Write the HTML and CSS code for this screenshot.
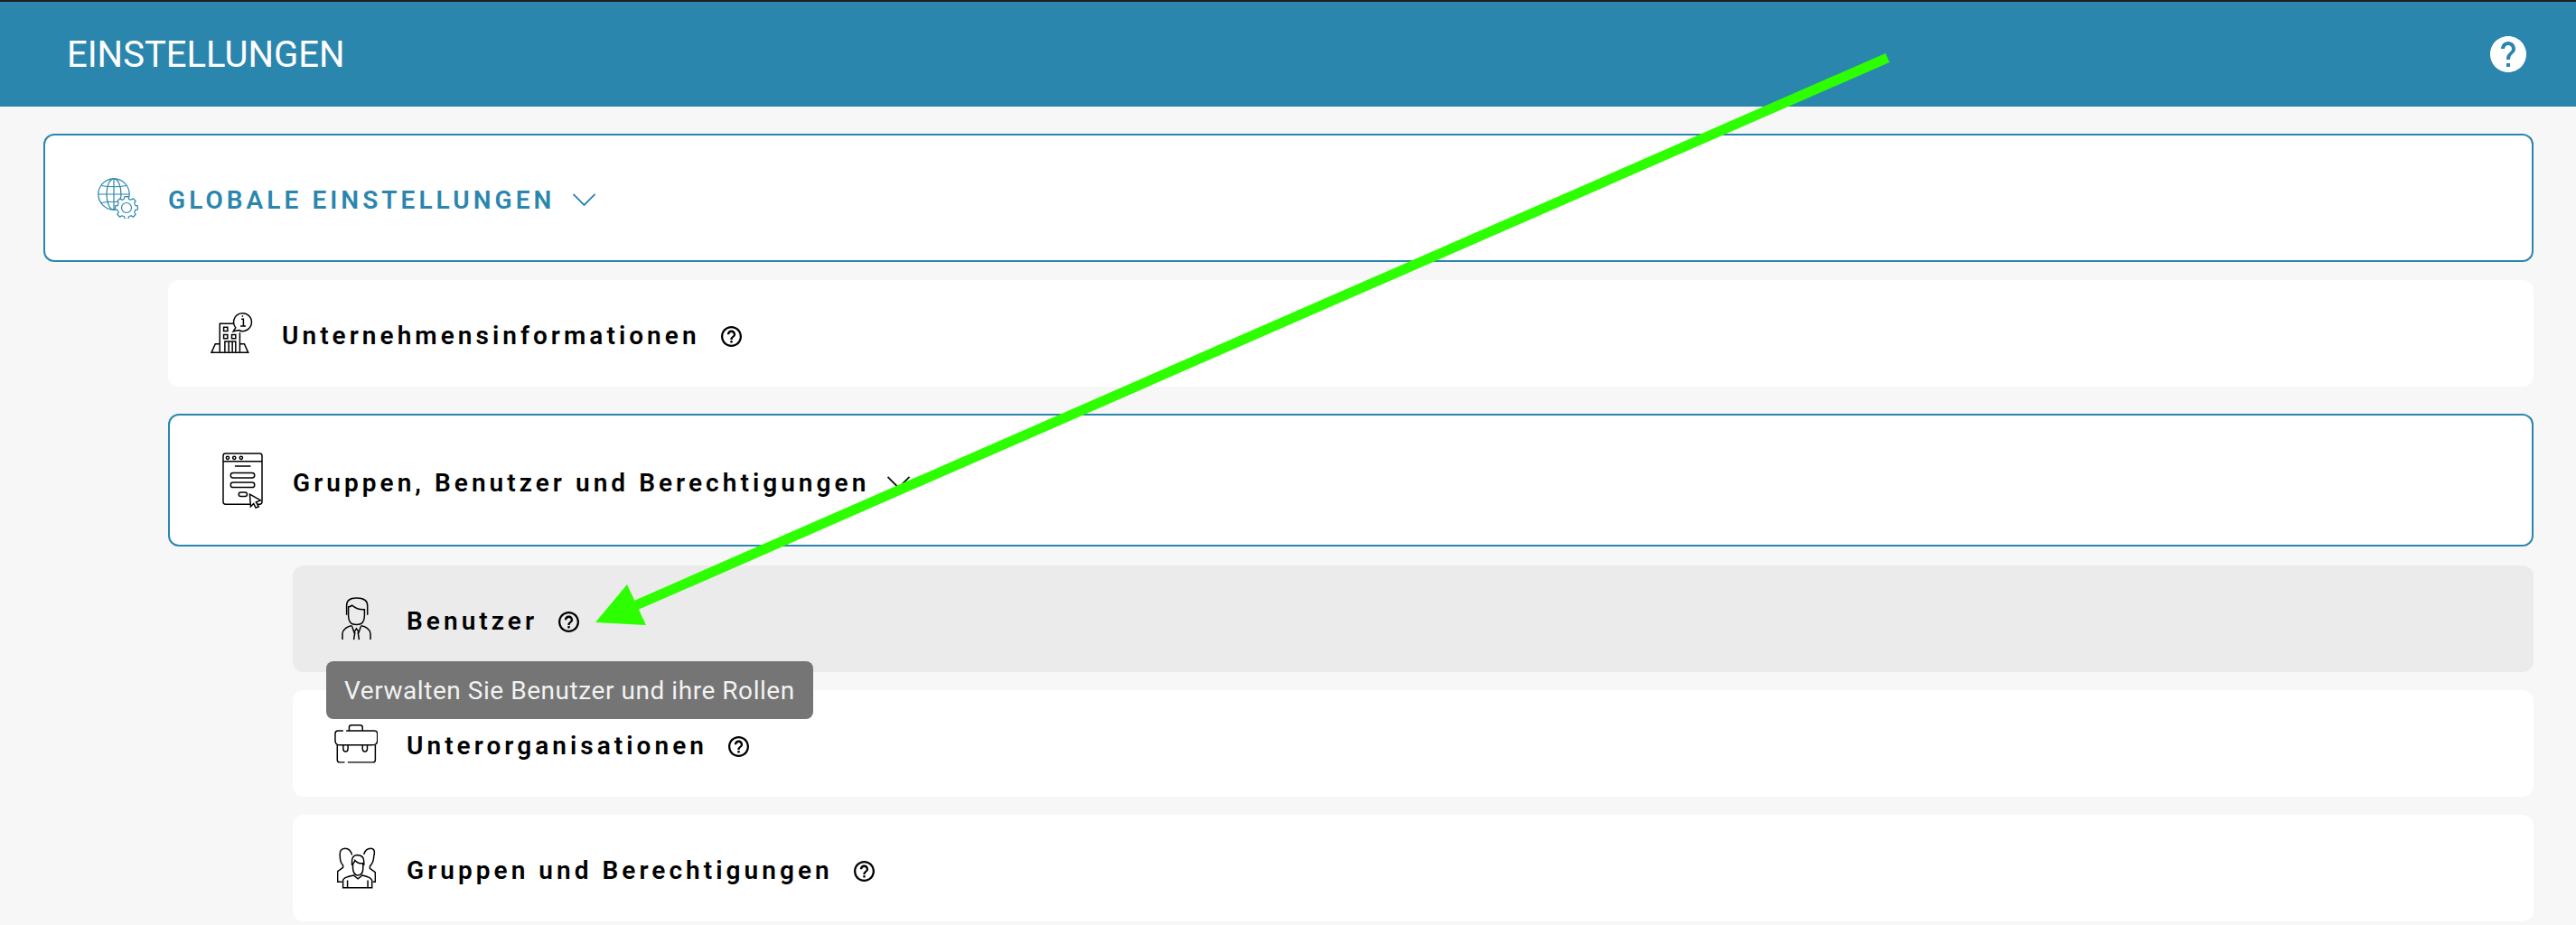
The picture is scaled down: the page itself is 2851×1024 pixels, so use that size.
FILE: index.html
```html
<!DOCTYPE html>
<html lang="de">
  <head>
    <meta charset="UTF-8" />
    <title>Einstellungen</title>
    <link rel="stylesheet" href="styles.css">
  </head>
  <body>
    <svg class="defs" width="0" height="0">
      <symbol id="help-outline" viewBox="2 2 20 20">
        <path d="M11 18h2v-2h-2v2zm1-16C6.48 2 2 6.48 2 12s4.48 10 10 10 10-4.48 10-10S17.52 2 12 2zm0 18c-4.41 0-8-3.59-8-8s3.59-8 8-8 8 3.59 8 8-3.59 8-8 8zm0-14c-2.21 0-4 1.79-4 4h2c0-1.1.9-2 2-2s2 .9 2 2c0 2-3 1.75-3 5h2c0-2.25 3-2.5 3-5 0-2.21-1.79-4-4-4z" />
      </symbol>
      <symbol id="help-solid" viewBox="2 2 20 20">
        <path d="M12 2C6.48 2 2 6.48 2 12s4.48 10 10 10 10-4.48 10-10S17.52 2 12 2zm1 17h-2v-2h2v2zm2.07-7.75l-.9.92C13.45 12.9 13 13.5 13 15h-2v-.5c0-1.1.45-2.1 1.17-2.83l1.24-1.26c.37-.36.59-.86.59-1.41 0-1.1-.9-2-2-2s-2 .9-2 2H8c0-2.21 1.79-4 4-4s4 1.79 4 4c0 .88-.36 1.68-.93 2.25z" />
      </symbol>
      <symbol id="chevron" viewBox="0 0 27 14">
        <path d="M.5 .5 13.5 13.5 26.5 .5" />
      </symbol>
      <path id="tooth" d="M9.66 -2.59 12.35 -1.96V1.96L9.66 2.59A10 10 0 0 1 8.66 5" />
    </svg>

    <header class="topbar">
      <h1>EINSTELLUNGEN</h1>
      <svg class="topbar-help"><use href="#help-solid" /></svg>
    </header>

    <main class="content">
      <section class="row row-global">
        <span class="row-icon">
          <svg class="icon-global" viewBox="0 0 45 45">
            <circle cx="18" cy="18" r="17.2" />
            <ellipse cx="18" cy="18" rx="8" ry="17.2" />
            <path d="M18 1V35M1 18H35M4 8.500Q18 11 32 8.500M4 27.500Q18 25 32 27.500" />
            <circle class="gear-back" cx="32" cy="33" r="12" />
            <g transform="translate(32 33)">
              <use href="#tooth" />
              <use href="#tooth" transform="rotate(45)" />
              <use href="#tooth" transform="rotate(90)" />
              <use href="#tooth" transform="rotate(135)" />
              <use href="#tooth" transform="rotate(180)" />
              <use href="#tooth" transform="rotate(225)" />
              <use href="#tooth" transform="rotate(270)" />
              <use href="#tooth" transform="rotate(315)" />
              <circle r="5.500" />
            </g>
          </svg>
        </span>
        <span class="row-label">GLOBALE EINSTELLUNGEN</span>
        <svg class="chevron"><use href="#chevron" /></svg>
      </section>

      <div class="sub">
        <section class="row row-plain">
          <span class="row-icon">
            <svg class="icon-building" viewBox="25 30 140 145">
              <path d="M55 165V70H100M122 100V165M68 82H81V95H68ZM68 107H81V120H68ZM95 107H108V120H95ZM72 165V130H108V165M85 130V165M97 130V165" />
              <path d="M55 138H40L27 167H150L137 138H122" />
              <path d="M108 84A30 30 0 1 1 118 92L100 96Z" />
              <path d="M127 55H134V78M124 78H142M131 43V47" />
            </svg>
          </span>
          <span class="row-label">Unternehmensinformationen</span>
          <svg class="help"><use href="#help-outline" /></svg>
        </section>

        <section class="row row-open">
          <span class="row-icon">
            <svg class="icon-form" viewBox="30 33 136 186">
              <path d="M33 43Q33 35 41 35H155Q163 35 163 43V197Q163 205 155 205H41Q33 205 33 197ZM33 62H163M72 78H125" />
              <circle cx="48" cy="50" r="5" />
              <circle cx="70" cy="50" r="5" />
              <circle cx="93" cy="50" r="5" />
              <rect x="58" y="100" width="80" height="17" rx="8" />
              <rect x="58" y="132" width="80" height="17" rx="8" />
              <rect x="85" y="165" width="28" height="14" rx="7" />
              <path class="cursor" d="M122 172 158 192 143 198 152 213 142 217 135 203 125 213Z" />
            </svg>
          </span>
          <span class="row-label">Gruppen, Benutzer und Berechtigungen</span>
          <svg class="chevron chevron-dark"><use href="#chevron" /></svg>
        </section>

        <div class="sub">
          <section class="row row-plain row-active">
            <span class="row-icon">
              <svg class="icon-user" viewBox="55 33 100 144">
                <path d="M72 92V60Q72 35 105 35Q142 35 142 60V92" />
                <path d="M78 65V95Q78 125 105 125Q132 125 132 95V74Q110 76 90 60Q85 65 78 65Z" />
                <path d="M58 175V155Q60 135 90 128M152 175V155Q150 135 120 128" />
                <path d="M90 130 97 150 105 138 113 150 120 130M100 150 96 175M110 150 114 175" />
              </svg>
            </span>
            <span class="row-label">Benutzer</span>
            <svg class="help"><use href="#help-outline" /></svg>
            <div class="tooltip">Verwalten Sie Benutzer und ihre Rollen</div>
          </section>

          <section class="row row-plain">
            <span class="row-icon">
              <svg class="icon-case" viewBox="30 32 146 128">
                <path d="M80 52V40Q80 33 88 33H117Q125 33 125 40V52" />
                <path d="M60 52H42Q33 52 33 62V85Q33 100 50 100H155Q175 100 175 85V62Q175 52 165 52H70" />
                <path d="M40 100V150Q40 158 48 158H65M75 158H160Q168 158 168 150V100" />
                <path d="M60 100V112Q60 122 68 122Q76 122 76 112V100M125 100V112Q125 122 133 122Q141 122 141 112V100" />
              </svg>
            </span>
            <span class="row-label">Unterorganisationen</span>
            <svg class="help"><use href="#help-outline" /></svg>
          </section>

          <section class="row row-plain">
            <span class="row-icon">
              <svg class="icon-group" viewBox="35 25 130 141">
                <path d="M85 85V70Q85 52 102 50Q125 50 125 72V85" />
                <path d="M88 80V95Q90 118 105 118Q122 118 122 95V78Q105 80 95 68Q92 76 88 80Z" />
                <path d="M55 160V135Q55 125 90 118L105 130 120 118Q150 125 152 135V160ZM70 135V160M138 135V160" />
                <path d="M85 50Q80 28 62 28Q42 28 45 55Q45 75 55 85V92L37 105V140H52" />
                <path d="M125 48Q130 28 148 28Q165 28 158 55Q158 75 145 88V95L163 108V140H155" />
              </svg>
            </span>
            <span class="row-label">Gruppen und Berechtigungen</span>
            <svg class="help"><use href="#help-outline" /></svg>
          </section>
        </div>
      </div>
    </main>

    <svg class="arrow" viewBox="0 0 2851 1024">
      <path class="arrow-shaft" d="M2089 64 704 670" />
      <path class="arrow-head" d="M659 689 694 647 715 692Z" />
    </svg>
  </body>
</html>
```

FILE: styles.css
```css
* {
  box-sizing: border-box;
}

html,
body {
  height: 100%;
}

body {
  margin: 0;
  overflow: hidden;
  position: relative;
  background-color: #f7f7f7;
  font-family: Roboto, "Liberation Sans", sans-serif;
  color: #000;
}

.defs {
  position: absolute;
}

.topbar {
  height: 118px;
  border-top: 2px solid #1f1f1f;
  background-color: #2b86ae;
  display: flex;
  align-items: center;
  justify-content: space-between;
  padding: 0 55px 0 74px;
}

.topbar h1 {
  margin: 0;
  color: #fff;
  font-size: 40px;
  font-weight: 400;
}

.topbar-help {
  width: 40px;
  height: 40px;
  fill: #fff;
}

.content {
  padding: 30px 47px 0 48px;
}

.sub {
  margin-left: 138px;
}

.row {
  position: relative;
  display: flex;
  align-items: center;
  background-color: #fff;
  border-radius: 12px;
}

.row-global {
  height: 142px;
  padding-left: 50px;
  margin-bottom: 20px;
  border: 2px solid #2b86ae;
}

.row-plain {
  height: 118px;
  padding-left: 40px;
  margin-bottom: 20px;
}

.row-open {
  height: 147px;
  padding-left: 50px;
  margin: 30px 0 21px;
  border: 2px solid #2b86ae;
}

.row-active {
  background-color: #ebebeb;
}

.row-icon {
  width: 60px;
  margin-right: 26px;
  display: flex;
  justify-content: center;
  flex-shrink: 0;
}

.row-icon svg {
  fill: none;
  stroke: #000;
  stroke-width: 4.500;
}

.row-label {
  padding-top: 5px;
  font-size: 28px;
  font-weight: 600;
  letter-spacing: 4.050px;
  white-space: nowrap;
}

.row-global .row-label {
  color: #2b86ae;
}

.row-global .row-icon svg {
  stroke: #2b86ae;
  stroke-width: 1.200;
}

.gear-back {
  fill: #fff;
  stroke: none;
}

.icon-global {
  width: 45px;
  height: 45px;
}

.icon-building {
  width: 47px;
  height: 48px;
}

.icon-form {
  width: 45px;
  height: 62px;
}

.icon-user {
  width: 33px;
  height: 48px;
}

.icon-case {
  width: 48px;
  height: 43px;
}

.icon-group {
  width: 43px;
  height: 47px;
}

.cursor {
  fill: #fff;
}

.chevron {
  width: 25px;
  height: 14px;
  margin-left: 20px;
  margin-top: 4px;
  fill: none;
  stroke: #2b86ae;
  stroke-width: 2;
}

.chevron-dark {
  stroke: #111;
}

.help {
  width: 23px;
  height: 23px;
  margin-left: 23px;
  margin-top: 6px;
  fill: #000;
}

.tooltip {
  position: absolute;
  left: 37px;
  top: 106px;
  height: 64px;
  padding: 0 20px;
  display: flex;
  align-items: center;
  background-color: #757575;
  border-radius: 8px;
  color: #f2f2f2;
  font-size: 28px;
  font-weight: 400;
  letter-spacing: .55px;
  white-space: nowrap;
  z-index: 2;
}

.arrow {
  position: absolute;
  left: 0;
  top: 0;
  width: 2851px;
  height: 1024px;
  z-index: 3;
}

.arrow-shaft {
  fill: none;
  stroke: #2dff00;
  stroke-width: 11;
}

.arrow-head {
  fill: #2dff00;
}
```
